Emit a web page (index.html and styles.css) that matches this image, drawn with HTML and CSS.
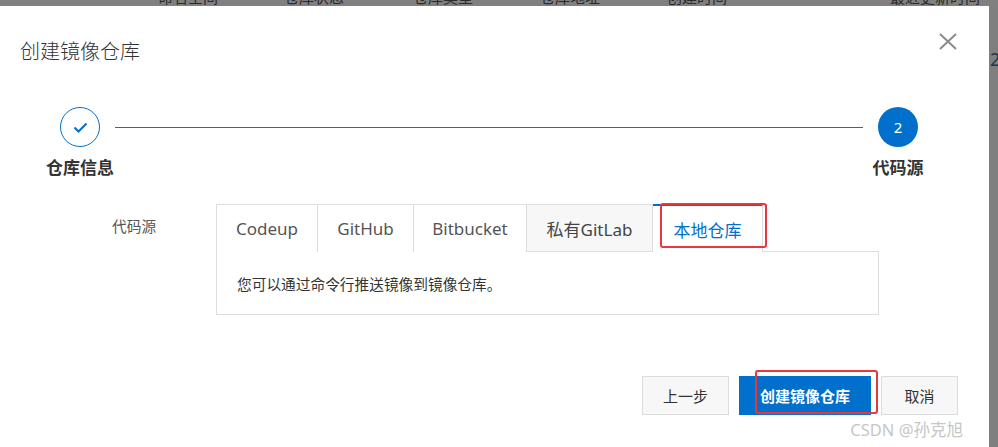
FILE: index.html
```html
<!DOCTYPE html>
<html lang="zh-CN">
<head>
<meta charset="utf-8">
<title>创建镜像仓库</title>
<link rel="stylesheet" href="styles.css">
</head>
<body>
<div class="page">
  <div class="bg-head">
    <span>命名空间</span>
    <span>仓库状态</span>
    <span>仓库类型</span>
    <span>仓库地址</span>
    <span>创建时间</span>
    <span>最近更新时间</span>
  </div>
  <div class="main">
    <section class="modal">
      <h1 class="modal-title">创建镜像仓库</h1>
      <button class="close" aria-label="关闭">
        <svg width="18" height="17" viewBox="0 0 18 17"><path d="M1 1 L17 16 M17 1 L1 16" stroke="#8a8a8a" stroke-width="2" fill="none"/></svg>
      </button>

      <div class="steps">
        <div class="step done">
          <div class="step-dot">
            <svg width="15" height="11" viewBox="0 0 15 11"><polyline points="1.5,5.5 5.5,9.5 13.5,1.5" fill="none" stroke="#0070cc" stroke-width="2"/></svg>
          </div>
          <div class="step-label">仓库信息</div>
        </div>
        <div class="step-line"></div>
        <div class="step current">
          <div class="step-dot">2</div>
          <div class="step-label">代码源</div>
        </div>
      </div>

      <div class="form-row">
        <div class="form-label">代码源</div>
        <div class="tabs-wrap">
          <div class="tabs">
            <div class="tab tab-first w-codeup">Codeup</div>
            <div class="tab w-github">GitHub</div>
            <div class="tab w-bitbucket">Bitbucket</div>
            <div class="tab tab-gray w-gitlab">私有GitLab</div>
            <div class="tab tab-active w-local">本地仓库<span class="mark mark-tab"></span></div>
            <div class="tab-fill"></div>
          </div>
          <div class="panel">您可以通过命令行推送镜像到镜像仓库。</div>
        </div>
      </div>

      <div class="footer">
        <button class="btn">上一步</button>
        <button class="btn btn-primary">创建镜像仓库<span class="mark mark-btn"></span></button>
        <button class="btn btn-cancel">取消</button>
      </div>

      <div class="watermark">CSDN @孙克旭</div>
    </section>
    <div class="side"><span>2</span></div>
  </div>
</div>
</body>
</html>
```

FILE: styles.css
```css
* { box-sizing: border-box; }

body {
  margin: 0;
  background: #808080;
  font-family: "Noto Sans", "Noto Sans CJK SC", sans-serif;
  overflow: hidden;
}

.page {
  width: 998px;
  height: 447px;
  display: flex;
  flex-direction: column;
}

.bg-head {
  height: 6px;
  overflow: hidden;
  display: grid;
  grid-template-columns: 126px 129px 127px 127px 223px auto;
  padding-left: 158px;
  font-size: 15px;
  line-height: 15px;
  color: #2b2b2b;
}

.bg-head span {
  margin-top: -10px;
  white-space: nowrap;
}

.main {
  flex: 1;
  display: flex;
  min-height: 0;
}

.modal {
  width: 989px;
  background: #fff;
  position: relative;
  padding-top: 32px;
}

.side {
  flex: 1;
  background: #7f7f7f;
  overflow: hidden;
}

.side span {
  display: block;
  margin-top: 43px;
  margin-left: 1px;
  font-size: 18px;
  line-height: 20px;
  color: #1f3346;
}

.modal-title {
  margin: 0 0 0 20px;
  font-size: 20px;
  line-height: 28px;
  font-weight: 300;
  color: #333;
}

.close {
  position: absolute;
  top: 27px;
  right: 32px;
  width: 18px;
  height: 17px;
  padding: 0;
  border: none;
  background: none;
  display: flex;
}

.steps {
  display: flex;
  align-items: flex-start;
  margin-top: 41px;
  padding: 0 71px 0 60px;
}

.step {
  width: 40px;
  display: flex;
  flex-direction: column;
  align-items: center;
}

.step-dot {
  width: 40px;
  height: 40px;
  border-radius: 50%;
  display: flex;
  align-items: center;
  justify-content: center;
}

.done .step-dot {
  border: 1px solid #0070cc;
}

.current .step-dot {
  background: #0070cc;
  color: #fff;
  font-size: 15px;
}

.step-label {
  margin-top: 9px;
  font-size: 17px;
  line-height: 24px;
  font-weight: 700;
  color: #333;
  white-space: nowrap;
}

.step-line {
  flex: 1;
  height: 1px;
  background: #1a6cc2;
  margin: 20px 15px 0;
}

.form-row {
  display: flex;
  margin-top: 24px;
  padding-left: 112px;
}

.form-label {
  width: 104px;
  padding-top: 12px;
  font-size: 14.7px;
  line-height: 20px;
  color: #555;
}

.tabs-wrap {
  width: 663px;
}

.tabs {
  display: flex;
  height: 48px;
}

.tab {
  height: 48px;
  display: flex;
  align-items: center;
  justify-content: center;
  border-top: 1px solid #dddddd;
  border-right: 1px solid #dddddd;
  font-size: 17px;
  color: #555;
  background: #fff;
  position: relative;
  white-space: nowrap;
}

.tab-first { border-left: 1px solid #dddddd; }

.w-codeup { width: 102px; }
.w-github { width: 96px; }
.w-bitbucket { width: 113px; }
.w-gitlab { width: 126px; }
.w-local { width: 110px; }

.tab-gray {
  background: #f7f7f7;
  border-bottom: 1px solid #dddddd;
  color: #444;
}

.tab-active {
  border-top: 2px solid #0070cc;
  color: #0070cc;
}

.tab-fill {
  flex: 1;
  border-bottom: 1px solid #dddddd;
}

.panel {
  height: 63px;
  border: 1px solid #dddddd;
  border-top: none;
  padding: 0 20px;
  display: flex;
  align-items: center;
  font-size: 14.7px;
  color: #333;
}

.footer {
  display: flex;
  justify-content: flex-end;
  gap: 10px;
  margin-top: 61px;
  padding-right: 31px;
}

.btn {
  height: 39px;
  padding: 0 20px;
  border: 1px solid #dcdcdc;
  background: #f7f7f7;
  font-family: inherit;
  font-size: 15px;
  color: #333;
  position: relative;
}

.btn-primary {
  background: #0070cc;
  border-color: #0070cc;
  color: #fff;
  font-weight: 700;
}

.btn-cancel {
  min-width: 77px;
}

.mark {
  position: absolute;
  border: 2px solid #e8383d;
  border-radius: 3px;
  pointer-events: none;
}

.mark-tab {
  left: 7px;
  top: -3px;
  width: 107px;
  height: 45px;
}

.mark-btn {
  left: 15px;
  top: -7px;
  width: 123px;
  height: 44px;
}

.watermark {
  position: absolute;
  right: 26px;
  bottom: 7px;
  font-size: 16.5px;
  line-height: 20px;
  color: #c6c6c6;
  text-shadow: 0 0 1px #fff;
  white-space: nowrap;
}
```
